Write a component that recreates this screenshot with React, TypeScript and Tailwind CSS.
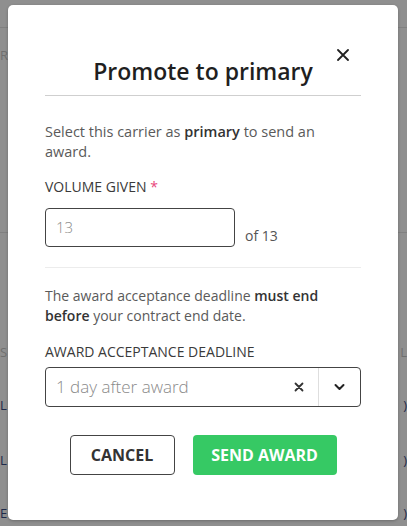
import React from 'react';

const font = { fontFamily: '"Open Sans", Lato, Arial, sans-serif' };

const BackgroundRow: React.FC<{ h: string; left?: string; right?: string; line?: boolean; dark?: boolean }> = ({
  h,
  left,
  right,
  line,
  dark,
}) => (
  <div className={`flex justify-between items-center ${h} ${line ? 'border-b border-[#808080]' : ''}`}>
    <span className={`text-[13px] leading-none ${dark ? 'text-[#1e2a4a]' : 'text-[#6f6f6f]'}`}>{left}</span>
    <span className={`text-[13px] leading-none ${dark ? 'text-[#1e2a4a]' : 'text-[#6f6f6f]'}`}>{right}</span>
  </div>
);

const App: React.FC = () => {
  return (
    <div className="relative w-[407px] h-[526px] overflow-hidden bg-[#8f8f8f]" style={font}>
      {/* page behind the overlay */}
      <div className="flex flex-col">
        <BackgroundRow h="h-[28px]" line />
        <BackgroundRow h="h-[13px]" />
        <BackgroundRow h="h-[28px]" left="R" />
        <BackgroundRow h="h-[164px]" line />
        <BackgroundRow h="h-[105px]" />
        <BackgroundRow h="h-[28px]" left="S" right="L" />
        <BackgroundRow h="h-[25px]" />
        <BackgroundRow h="h-[28px]" left="L" right=")" dark />
        <BackgroundRow h="h-[27px]" />
        <BackgroundRow h="h-[28px]" left="L" right=")" dark />
        <BackgroundRow h="h-[27px]" />
        <BackgroundRow h="h-[25px]" left="E" right=")" dark />
      </div>

      {/* modal */}
      <div className="absolute left-[8px] top-[5px] w-[390px] h-[515px] bg-white rounded-[5px] shadow-[0_1px_3px_rgba(0,0,0,0.25)]">
        <button className="absolute left-[328px] top-[43px] w-[14px] h-[14px] flex items-center justify-center">
          <svg width="12" height="12" viewBox="0 0 12 12" fill="none">
            <path d="M1 1L11 11M11 1L1 11" stroke="#222" strokeWidth="1.8" strokeLinecap="round" />
          </svg>
        </button>

        <div className="px-[37px] pt-[52px] flex flex-col">
          <div className="pb-[10px] border-b border-[#cfcfcf]">
            <h2 className="text-center text-[23px] leading-[28px] font-semibold text-[#1f1f1f]">Promote to primary</h2>
          </div>

          <p className="mt-[26px] pr-[20px] text-[14.5px] leading-[20px] text-[#5a5a5a]">
            Select this carrier as <b className="font-semibold text-[#333]">primary</b> to send an award.
          </p>

          <div className="mt-[16px] text-[14px] leading-[18px] text-[#3a3a3a]">
            VOLUME GIVEN <span className="text-[#e8467c]">*</span>
          </div>

          <div className="mt-[12px] flex items-end gap-[10px]">
            <div className="w-[190px] h-[39px] border border-[#444] rounded-[4px] flex items-center px-[10px]">
              <span className="text-[15px] font-light text-[#8a8a8a]">13</span>
            </div>
            <span className="text-[14px] text-[#555] pb-[1px]">of 13</span>
          </div>

          <div className="mt-[20px] border-t border-[#ececec]" />

          <p className="mt-[18px] text-[14px] leading-[20px] text-[#5a5a5a]">
            The award acceptance deadline <b className="font-semibold text-[#333]">must end before</b> your
            contract end date.
          </p>

          <div className="mt-[17px] text-[14px] leading-[18px] text-[#3a3a3a]">AWARD ACCEPTANCE DEADLINE</div>

          <div className="mt-[6px] h-[40px] border border-[#444] rounded-[4px] flex items-center">
            <span className="flex-1 pl-[10px] text-[17px] font-light text-[#8a8a8a]">1 day after award</span>
            <div className="w-[38px] h-full flex items-center justify-center">
              <svg width="10" height="10" viewBox="0 0 10 10" fill="none">
                <path d="M1.5 1.5L8.5 8.5M8.5 1.5L1.5 8.5" stroke="#333" strokeWidth="1.8" strokeLinecap="round" />
              </svg>
            </div>
            <div className="w-px h-[38px] bg-[#dedede]" />
            <div className="w-[41px] h-full flex items-center justify-center">
              <svg width="11" height="8" viewBox="0 0 11 8" fill="none">
                <path d="M1.5 2L5.5 6L9.5 2" stroke="#222" strokeWidth="2" strokeLinecap="round" strokeLinejoin="round" />
              </svg>
            </div>
          </div>

          <div className="mt-[28px] flex justify-center gap-[18px]">
            <button className="w-[105px] h-[40px] border border-[#444] rounded-[4px] bg-white text-[16px] font-bold text-[#333]">
              CANCEL
            </button>
            <button className="w-[144px] h-[40px] rounded-[4px] bg-[#36c964] text-[16px] font-bold text-white">
              SEND AWARD
            </button>
          </div>
        </div>
      </div>
    </div>
  );
};

export default App;
